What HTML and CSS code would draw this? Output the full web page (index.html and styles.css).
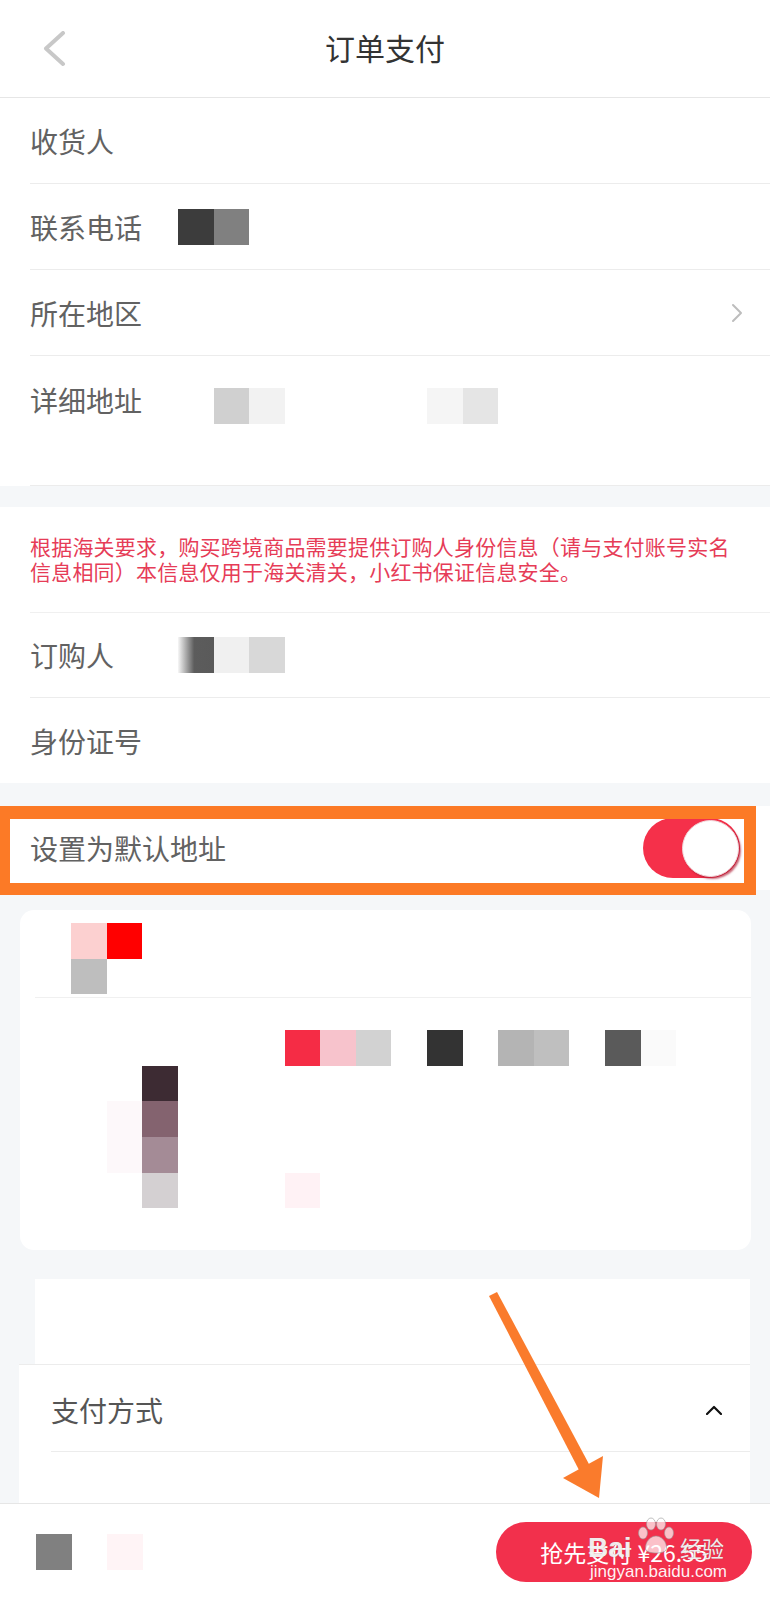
FILE: index.html
```html
<!DOCTYPE html>
<html lang="zh-CN">
<head>
<meta charset="utf-8">
<title>订单支付</title>
<link rel="stylesheet" href="styles.css">
</head>
<body>
<div class="page">
  <header class="topbar">
    <div class="topbar-side">
      <svg class="back" width="24" height="36" viewBox="0 0 24 36"><polyline points="20,2 3,17.5 20,33"/></svg>
    </div>
    <h1 class="title">订单支付</h1>
    <div class="topbar-side"></div>
  </header>

  <section class="panel">
    <div class="row"><span class="label">收货人</span></div>
    <div class="row"><span class="label">联系电话</span>
      <div class="mosaic"><i style="background:#3c3c3c"></i><i style="background:#808080"></i></div>
    </div>
    <div class="row"><span class="label">所在地区</span>
      <svg class="chev-right" width="12" height="20" viewBox="0 0 12 20"><polyline points="2,2 10,10 2,18"/></svg>
    </div>
    <div class="row row-tall"><span class="label">详细地址</span>
      <div class="mosaic mosaic-low"><i></i><i style="background:#d0d0d0"></i><i style="background:#f2f2f2"></i><i></i><i></i><i></i><i></i><i style="background:#f5f5f5"></i><i style="background:#e5e5e5"></i></div>
    </div>
  </section>

  <div class="gap gap-a"></div>

  <section class="panel">
    <p class="notice">根据海关要求，购买跨境商品需要提供订购人身份信息（请与支付账号实名信息相同）本信息仅用于海关清关，小红书保证信息安全。</p>
    <div class="row row-85"><span class="label">订购人</span>
      <div class="mosaic"><i class="fade-dark"></i><i style="background:#f0f0f0"></i><i style="background:#d8d8d8"></i></div>
    </div>
    <div class="row row-85 row-last"><span class="label">身份证号</span></div>
  </section>

  <div class="gap gap-b"></div>

  <section class="default-row">
    <span class="label-plain">设置为默认地址</span>
    <div class="toggle"><span class="knob"></span></div>
    <div class="annot-box"></div>
  </section>

  <section class="card">
    <div class="card-top">
      <div class="mgrid">
        <i style="grid-area:1/1;background:#fcd0d0"></i>
        <i style="grid-area:1/2;background:#ff0000"></i>
        <i style="grid-area:2/1;background:#bebebe"></i>
      </div>
    </div>
    <div class="card-divider"></div>
    <div class="card-body">
      <div class="mgrid">
        <i style="grid-area:1/7;background:#f52c45"></i>
        <i style="grid-area:1/8;background:#f7c3cc"></i>
        <i style="grid-area:1/9;background:#d2d2d2"></i>
        <i style="grid-area:1/11;background:#333333"></i>
        <i style="grid-area:1/13;background:#b4b4b4"></i>
        <i style="grid-area:1/14;background:#bfbfbf"></i>
        <i style="grid-area:1/16;background:#5a5a5a"></i>
        <i style="grid-area:1/17;background:#fafafa"></i>
        <i style="grid-area:2/3;background:#3d2b33"></i>
        <i style="grid-area:3/2;background:#fdf8fa"></i>
        <i style="grid-area:3/3;background:#84636f"></i>
        <i style="grid-area:4/2;background:#fdf8fa"></i>
        <i style="grid-area:4/3;background:#a48b96"></i>
        <i style="grid-area:5/3;background:#d4d0d2"></i>
        <i style="grid-area:5/7;background:#fff2f5"></i>
      </div>
    </div>
  </section>

  <section class="card2"></section>

  <section class="pay">
    <div class="pay-head">
      <span class="pay-label">支付方式</span>
      <svg class="chev-up" width="16" height="10" viewBox="0 0 16 10"><polyline points="1,9 8,2 15,9"/></svg>
    </div>
  </section>

  <footer class="bottombar">
    <div class="mosaic"><i style="background:#808080"></i><i></i><i style="background:#fff4f6"></i></div>
    <button class="paybtn">
      <span class="paybtn-text">抢先支付 ¥26.55</span>
      <span class="wm">
        <span class="wm-bai">Bai</span>
        <svg class="wm-paw" width="40" height="40" viewBox="0 0 40 40">
          <ellipse cx="7" cy="17" rx="4.5" ry="6"/>
          <ellipse cx="15" cy="8" rx="4.5" ry="6"/>
          <ellipse cx="25" cy="8" rx="4.5" ry="6"/>
          <ellipse cx="33" cy="17" rx="4.5" ry="6"/>
          <path d="M20 20 C12 20 8 30 10 34 C12 38 28 38 30 34 C32 30 28 20 20 20 Z"/>
        </svg>
        <span class="wm-jy">经验</span>
        <span class="wm-url">jingyan.baidu.com</span>
      </span>
    </button>
  </footer>

  <svg class="annot-arrow" width="770" height="1600" viewBox="0 0 770 1600">
    <polygon points="489,1296 497,1292 590,1466 580,1472"/>
    <polygon points="563,1478 603,1456 599,1498"/>
  </svg>
</div>
</body>
</html>
```

FILE: styles.css
```css
html, body {
  margin: 0;
  padding: 0;
}
body {
  background: #f5f7f9;
  font-family: "Noto Sans CJK SC", "Noto Sans", sans-serif;
  overflow: hidden;
}
.page {
  position: relative;
  width: 770px;
  height: 1600px;
}

/* header */
.topbar {
  height: 97px;
  background: #fff;
  border-bottom: 1px solid #e6e6e6;
  display: grid;
  grid-template-columns: 1fr auto 1fr;
  align-items: center;
}
.topbar-side {
  display: flex;
  align-items: center;
}
.back {
  margin-left: 43px;
  display: block;
}
.back polyline {
  fill: none;
  stroke: #c8c8c8;
  stroke-width: 4;
  stroke-linecap: round;
  stroke-linejoin: round;
}
.title {
  margin: 0 0 4px 0;
  font-size: 30px;
  line-height: 36px;
  font-weight: normal;
  color: #333;
}

/* white panels with rows */
.panel {
  background: #fff;
}
.row {
  margin-left: 30px;
  height: 86px;
  box-sizing: border-box;
  border-bottom: 1px solid #ececec;
  display: flex;
  align-items: center;
}
.row-85 {
  height: 85px;
}
.row-last {
  border-bottom: none;
}
.row-tall {
  height: 130px;
  align-items: flex-start;
  padding-top: 26px;
}
.label {
  width: 148px;
  flex: none;
  font-size: 28px;
  line-height: 36px;
  color: #626262;
}
.mosaic {
  display: flex;
}
.mosaic i {
  display: block;
  width: 35.6px;
  height: 36px;
}
.mosaic-low {
  margin-top: 6px;
}
.mosaic i.fade-dark {
  background: linear-gradient(to right, rgba(90, 90, 90, 0.05), #5c5c5c 45%, #5a5a5a);
}
.chev-right {
  margin-left: auto;
  margin-right: 27px;
  display: block;
}
.chev-right polyline {
  fill: none;
  stroke: #bdbdbd;
  stroke-width: 2;
  stroke-linecap: round;
  stroke-linejoin: round;
}

.gap-a { height: 21px; }
.gap-b { height: 23px; }

.notice {
  margin: 0 0 0 30px;
  padding: 27px 20px 28px 0;
  border-bottom: 1px solid #f0f0f0;
  font-size: 21px;
  letter-spacing: 0.2px;
  line-height: 25px;
  color: #e63c57;
}

/* default address row */
.default-row {
  position: relative;
  height: 84px;
  background: #fff;
  display: flex;
  align-items: center;
  padding-left: 30px;
}
.label-plain {
  font-size: 28px;
  line-height: 36px;
  color: #626262;
}
.toggle {
  margin-left: auto;
  margin-right: 30px;
  width: 97px;
  height: 60px;
  border-radius: 30px;
  background: #f5304a;
  display: flex;
  align-items: center;
  justify-content: flex-end;
  padding: 0 1px;
  box-sizing: border-box;
}
.knob {
  width: 57px;
  height: 57px;
  border-radius: 50%;
  background: #fff;
  box-sizing: border-box;
  border: 1px solid #f1d6da;
  box-shadow: 2px 2px 2px rgba(170, 20, 45, 0.65);
}
.annot-box {
  position: absolute;
  left: -2px;
  top: 0;
  width: 758px;
  height: 89px;
  box-sizing: border-box;
  border: 12px solid #fc7a26;
  border-top-width: 13px;
}

/* product card */
.card {
  margin: 20px 19px 0 20px;
  background: #fff;
  border-radius: 14px;
}
.card-top {
  padding: 13px 0 3px 51px;
}
.card-divider {
  margin-left: 15px;
  border-top: 1px solid #f0f0f0;
}
.card-body {
  padding: 32px 0 42px 51px;
}
.mgrid {
  display: grid;
  grid-template-columns: repeat(17, 35.6px);
  grid-auto-rows: 35.6px;
}
.mgrid i {
  display: block;
}

.card2 {
  margin: 29px 20px 0 35px;
  height: 85px;
  background: #fff;
}

/* payment */
.pay {
  margin: 0 20px 0 19px;
  height: 139px;
  box-sizing: border-box;
  background: #fff;
  border-top: 1px solid #ececec;
}
.pay-head {
  margin-left: 32px;
  height: 87px;
  border-bottom: 1px solid #ececec;
  display: flex;
  align-items: center;
  padding-right: 28px;
  padding-top: 4px;
  box-sizing: border-box;
}
.pay-label {
  font-size: 28px;
  line-height: 36px;
  color: #555;
}
.chev-up {
  margin-left: auto;
  display: block;
}
.chev-up polyline {
  fill: none;
  stroke: #111;
  stroke-width: 2.2;
  stroke-linecap: round;
  stroke-linejoin: round;
}

/* bottom bar */
.bottombar {
  height: 97px;
  box-sizing: border-box;
  background: #fff;
  border-top: 1px solid #e6e6e6;
  display: flex;
  align-items: center;
  padding: 0 18px 0 36px;
}
.paybtn {
  position: relative;
  margin-left: auto;
  width: 256px;
  height: 60px;
  border: none;
  border-radius: 30px;
  background: #f2304c;
  padding: 0;
  font-family: "Noto Sans CJK SC", "Noto Sans", sans-serif;
  display: flex;
  align-items: center;
  justify-content: center;
}
.paybtn-text {
  font-size: 23px;
  color: #fff;
  line-height: 30px;
}
.wm {
  position: absolute;
  inset: 0;
  pointer-events: none;
}
.wm-bai {
  position: absolute;
  left: 92px;
  top: 10px;
  font-family: "Liberation Sans", sans-serif;
  font-weight: bold;
  font-size: 28px;
  line-height: 32px;
  color: rgba(255, 255, 255, 0.9);
  text-shadow: 0 0 1px rgba(110, 110, 110, 0.7);
}
.wm-paw {
  position: absolute;
  left: 140px;
  top: -6px;
}
.wm-paw ellipse,
.wm-paw path {
  fill: rgba(255, 255, 255, 0.7);
  stroke: rgba(150, 150, 150, 0.6);
  stroke-width: 1;
}
.wm-jy {
  position: absolute;
  left: 184px;
  top: 12px;
  font-size: 22px;
  line-height: 26px;
  color: rgba(255, 255, 255, 0.9);
  text-shadow: 0 0 1px rgba(110, 110, 110, 0.7);
}
.wm-url {
  position: absolute;
  left: 94px;
  top: 40px;
  font-family: "Liberation Sans", sans-serif;
  font-size: 17px;
  line-height: 20px;
  color: rgba(255, 255, 255, 0.95);
}

/* annotation arrow */
.annot-arrow {
  position: absolute;
  left: 0;
  top: 0;
  pointer-events: none;
}
.annot-arrow polygon {
  fill: #fa7b2c;
}
```
